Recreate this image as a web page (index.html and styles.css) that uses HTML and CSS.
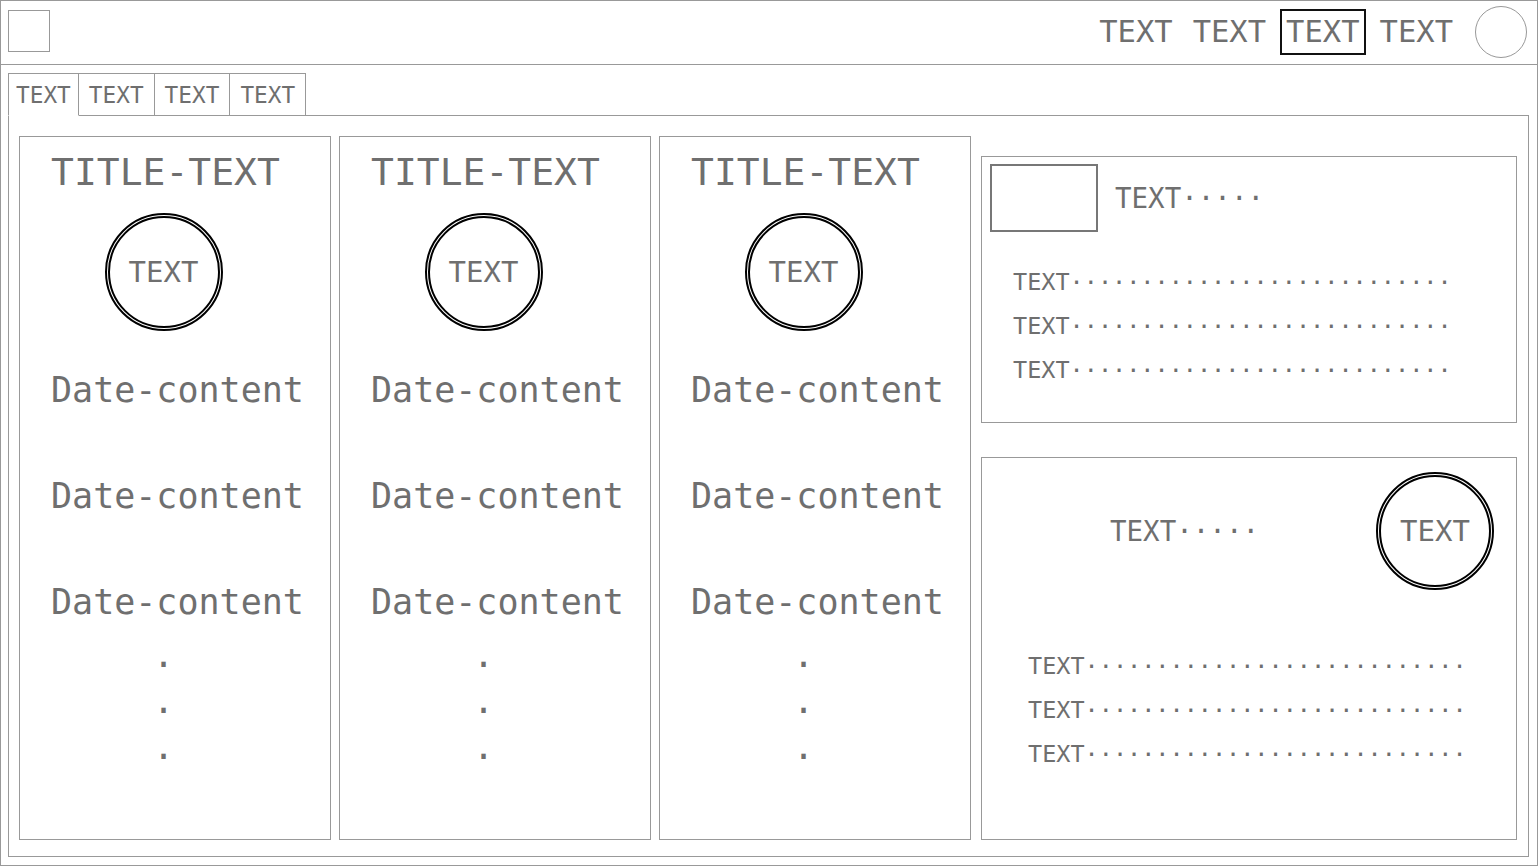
FILE: index.html
```html
<!DOCTYPE html>
<html lang="en">
<head>
  <meta charset="UTF-8" />
  <meta name="viewport" content="width=device-width, initial-scale=1.0" />
  <title>Dashboard Wireframe</title>
  <link rel="stylesheet" href="styles.css">
</head>
<body>
  <div class="app">
    <header class="topbar">
      <div class="logo"></div>
      <nav class="nav">
        <span class="nav-item">TEXT</span>
        <span class="nav-item">TEXT</span>
        <span class="nav-item active">TEXT</span>
        <span class="nav-item">TEXT</span>
      </nav>
      <div class="avatar"></div>
    </header>

    <main class="workspace">
      <div class="tabs">
        <span class="tab active">TEXT</span>
        <span class="tab">TEXT</span>
        <span class="tab">TEXT</span>
        <span class="tab">TEXT</span>
      </div>

      <div class="tab-panel">
        <section class="card">
          <h2 class="card-title">TITLE-TEXT</h2>
          <div class="ring">TEXT</div>
          <p class="date">Date-content</p>
          <p class="date">Date-content</p>
          <p class="date">Date-content</p>
          <div class="more">
            <span>·</span>
            <span>·</span>
            <span>·</span>
          </div>
        </section>

        <section class="card">
          <h2 class="card-title">TITLE-TEXT</h2>
          <div class="ring">TEXT</div>
          <p class="date">Date-content</p>
          <p class="date">Date-content</p>
          <p class="date">Date-content</p>
          <div class="more">
            <span>·</span>
            <span>·</span>
            <span>·</span>
          </div>
        </section>

        <section class="card">
          <h2 class="card-title">TITLE-TEXT</h2>
          <div class="ring">TEXT</div>
          <p class="date">Date-content</p>
          <p class="date">Date-content</p>
          <p class="date">Date-content</p>
          <div class="more">
            <span>·</span>
            <span>·</span>
            <span>·</span>
          </div>
        </section>

        <aside class="side">
          <div class="box box-profile">
            <div class="box-head">
              <div class="thumb"></div>
              <span class="lead">TEXT·····</span>
            </div>
            <ul class="lines">
              <li>TEXT···························</li>
              <li>TEXT···························</li>
              <li>TEXT···························</li>
            </ul>
          </div>

          <div class="box box-summary">
            <div class="box-head summary-head">
              <span class="lead">TEXT·····</span>
              <div class="ring">TEXT</div>
            </div>
            <ul class="lines summary-lines">
              <li>TEXT···························</li>
              <li>TEXT···························</li>
              <li>TEXT···························</li>
            </ul>
          </div>
        </aside>
      </div>
    </main>
  </div>
</body>
</html>
```

FILE: styles.css
```css
* {
  box-sizing: border-box;
}
body {
  margin: 0;
  padding: 0;
  background: #fff;
  font-family: "DejaVu Sans Mono", monospace;
  color: #6f6f6f;
}
.app {
  width: 1538px;
  height: 866px;
  border: 1px solid #999;
  display: flex;
  flex-direction: column;
}

/* top bar */
.topbar {
  height: 64px;
  flex: none;
  display: flex;
  align-items: center;
  padding: 0 10px 0 7px;
  border-bottom: 1px solid #999;
}
.logo {
  width: 42px;
  height: 42px;
  border: 1px solid #999;
  margin-top: -3px;
}
.nav {
  margin-left: auto;
  display: flex;
  gap: 8px;
}
.nav-item {
  font-size: 30.5px;
  line-height: 42px;
  padding: 0 4px;
  border: 2px solid transparent;
  margin-top: -2px;
}
.nav-item.active {
  border-color: #111;
}
.avatar {
  width: 52px;
  height: 52px;
  margin-left: 16px;
  border: 1px solid #999;
  border-radius: 50%;
  margin-top: -2px;
}

/* tabs */
.workspace {
  flex: 1;
  display: flex;
  flex-direction: column;
  padding: 8px 8px 8px 7px;
}
.tabs {
  display: flex;
  flex: none;
}
.tab {
  height: 43px;
  font-size: 22.75px;
  line-height: 42px;
  padding: 0 10px;
  border: 1px solid #999;
  border-left: none;
}
.tab.active {
  padding: 0 7px;
  border-left: 1px solid #999;
  border-bottom-color: #fff;
}
.tabs::after {
  content: "";
  flex: 1;
  border-bottom: 1px solid #999;
}
.tab-panel {
  flex: 1;
  display: grid;
  grid-template-columns: 312px 312px 312px 1fr;
  column-gap: 8px;
  padding: 20px 11px 16px 10px;
  border: 1px solid #999;
  border-top: none;
}

/* cards */
.card {
  border: 1px solid #999;
  padding: 13px 54px 0 31px;
  display: flex;
  flex-direction: column;
}
.card-title {
  margin: 0;
  font-size: 38px;
  line-height: 44px;
  font-weight: normal;
  white-space: nowrap;
}
.ring {
  width: 118px;
  height: 118px;
  flex: none;
  border: 5px double #000;
  border-radius: 50%;
  display: flex;
  align-items: center;
  justify-content: center;
  font-size: 29px;
}
.card .ring {
  margin: 19px auto 0;
}
.date {
  margin: 66px 0 0;
  font-size: 35px;
  line-height: 40px;
  white-space: nowrap;
}
.date:first-of-type {
  margin-top: 39px;
}
.more {
  margin-top: 20px;
  display: flex;
  flex-direction: column;
  align-items: center;
  font-size: 35px;
  line-height: 46px;
}

/* right column */
.side {
  padding: 20px 0 0 2px;
  display: flex;
  flex-direction: column;
  gap: 34px;
}
.box {
  border: 1px solid #999;
}
.box-profile {
  padding: 7px 0 30px 8px;
}
.box-head {
  display: flex;
  align-items: center;
}
.thumb {
  width: 108px;
  height: 68px;
  border: 2px solid #777;
}
.lead {
  font-size: 27.5px;
  margin-left: 17px;
}
.lines {
  list-style: none;
  margin: 28px 0 0;
  padding: 0 0 0 23px;
  font-size: 23.5px;
  line-height: 44px;
  white-space: nowrap;
}
.box-summary {
  flex: 1;
  padding: 14px 22px 0 0;
}
.summary-head {
  padding-left: 128px;
}
.summary-head .lead {
  margin-left: 0;
}
.summary-head .ring {
  margin-left: auto;
}
.summary-lines {
  margin-top: 54px;
  padding-left: 46px;
}
```
